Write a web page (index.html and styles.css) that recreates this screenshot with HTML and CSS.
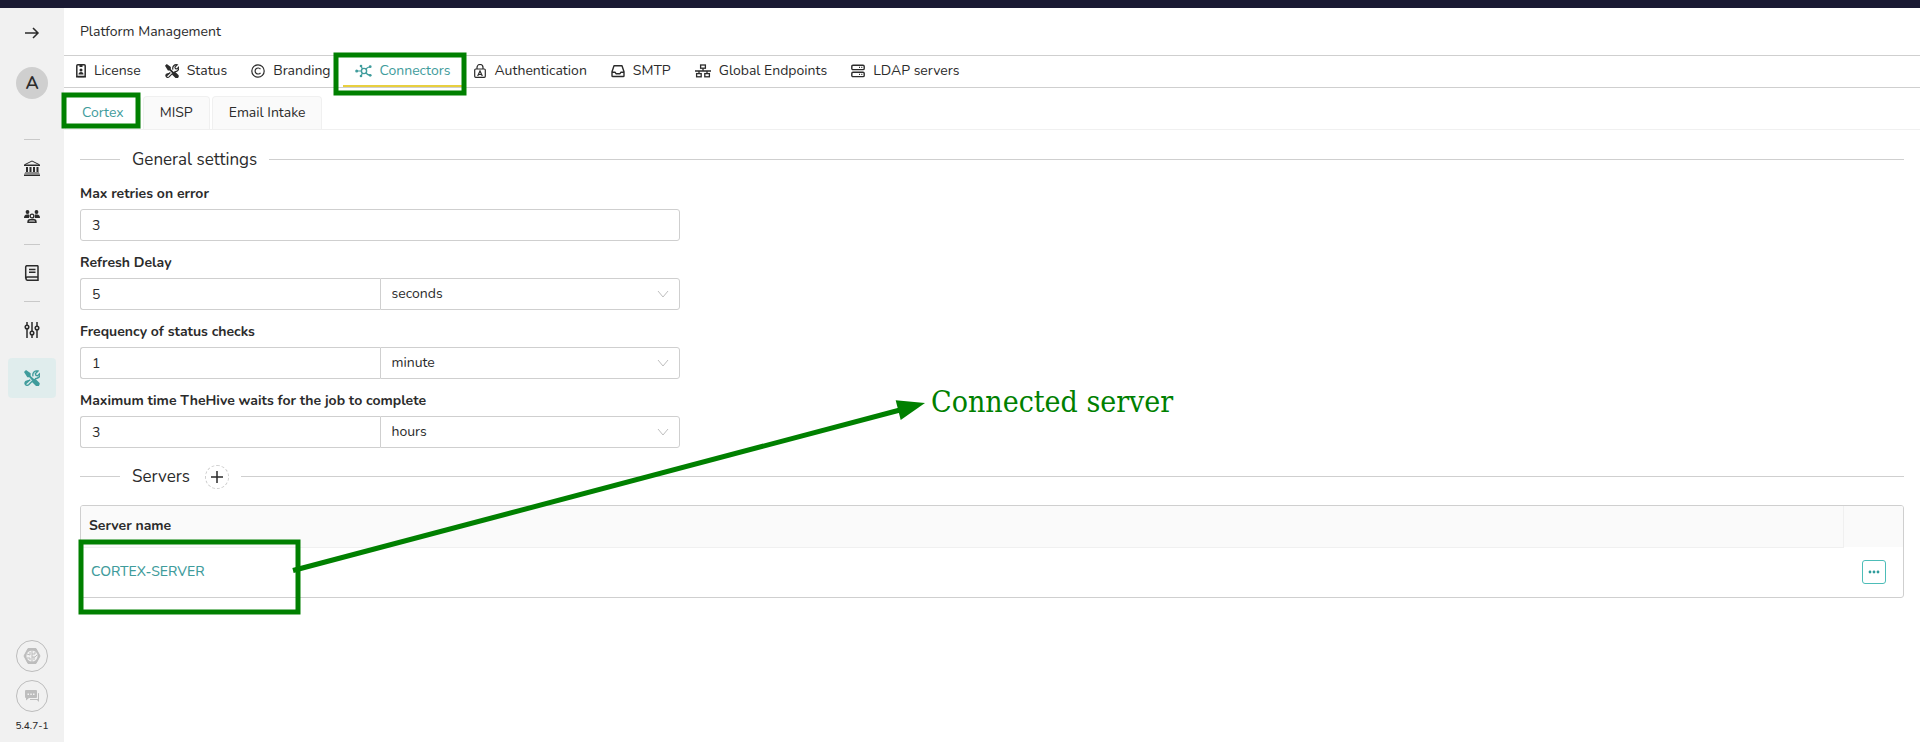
FILE: index.html
```html
<!DOCTYPE html>
<html lang="en">
<head>
<meta charset="utf-8">
<title>Platform Management</title>
<link rel="stylesheet" href="styles.css">
</head>
<body>
<svg class="sprite" aria-hidden="true">
  <symbol id="tools" viewBox="0 0 24 24">
    <path d="M0 3 3 0l7 5v4l5 4.500 2-.5 6 6q1.500 2-.5 4.500t-4.500.5l-6-6 .5-2L8 11H5z" fill="currentColor"/>
    <path d="M9 14.500l-6.500 6M9.500 15l-7 2.500q-2 2.500 0 4.500t4.500 0l6-6M13.500 9.500q-1-4 1.500-6.500t6-1.500l-4 4 1 2.500 2.500.5 3.500-3.500q.5 4.500-2.500 6.500t-5 1" fill="none" stroke="currentColor" stroke-width="2"/>
  </symbol>
</svg>
<div class="topbar"></div>
<div class="app">
  <aside class="side">
    <button class="side-btn expand" aria-label="Expand menu"><svg width="16" height="16" viewBox="0 0 16 16" fill="none" stroke="currentColor" stroke-width="1.500"><path d="M1 8h13M9 3l5 5-5 5"/></svg></button>
    <button class="avatar">A</button>
    <nav class="side-nav" aria-label="Main">
      <hr>
      <a class="side-btn" href="#org" aria-label="Organisations"><svg width="16" height="16" viewBox="0 0 16 16"><path d="M8 1l7 3.500v1H1v-1z" fill="none" stroke="currentColor"/><path d="M0 4.500h16V6H0zM2 7h2v5H2zM5.500 7h2v5h-2zM9 7h2v5H9zM12.500 7h2v5h-2zM1 12.500h14v1H1zM0 15h16v1H0z" fill="currentColor"/><path d="M0 13.500h16V15H0z" fill="#888"/></svg></a>
      <a class="side-btn" href="#users" aria-label="Users"><svg width="16" height="16" viewBox="0 0 16 16"><g fill="currentColor"><circle cx="3.500" cy="4" r="1.900"/><circle cx="12.500" cy="4" r="1.900"/><path d="M0 10q0-3.500 3-3.500h2V10zM16 10q0-3.500-3-3.500h-2V10z"/></g><g fill="none" stroke="currentColor" stroke-width="1.400"><circle cx="8" cy="8" r="1.900"/><path d="M4 14.300q0-2.500 2-2.500h4q2 0 2 2.500z"/></g></svg></a>
      <hr>
      <a class="side-btn" href="#docs" aria-label="Reports"><svg width="16" height="16" viewBox="0 0 16 16" fill="none" stroke="currentColor" stroke-width="1.500"><path d="M14 12H3.500a2 1.700 0 0 0 0 3.300H14V1.500q0-.8-.8-.8H3q-1.300 0-1.300 1.300v11.500M5 4.500h6.500M5 7.300h6.500"/></svg></a>
      <hr>
      <a class="side-btn" href="#entities" aria-label="Entities"><svg width="16" height="16" viewBox="0 0 16 16" fill="none" stroke="currentColor" stroke-width="1.500"><path d="M3 0v3M3 7v9M8 0v9M8 13v3M13 0v4M13 8v8"/><circle cx="3" cy="5" r="1.800"/><circle cx="8" cy="11" r="1.800"/><circle cx="13" cy="6" r="1.800"/></svg></a>
      <a class="side-btn active" href="#platform" aria-label="Platform"><svg width="16" height="16"><use href="#tools"/></svg></a>
    </nav>
    <div class="side-foot">
      <button class="round" aria-label="Cortex status"><svg width="18" height="18" viewBox="0 0 18 18"><path d="M5 1.500h8L17 9l-4 7.500H5L1 9z" fill="#bdbdbd" stroke="#bdbdbd" stroke-linejoin="round"/><circle cx="9" cy="9" r="5.600" fill="#f1f1f1"/><path d="M9 3v12M4 7l3 1V5M4 11h3v2M9 7h3V5M9 10h3l2-2M11 10v3" fill="none" stroke="#bdbdbd"/></svg></button>
      <button class="round" aria-label="Chat"><svg width="16" height="16" viewBox="0 0 16 16" fill="#bdbdbd"><path d="M2 2h10q1 0 1 1v6q0 1-1 1H5l-3 2.500V10q-1 0-1-1V3q0-1 1-1z"/><path d="M14 5h.500q.5 0 .5 1v8l-2-2H6v-1h8z"/><path d="M3.500 5.500h1.500V7H3.500zM6.300 5.500h1.500V7H6.300zM9 5.500h1.500V7H9z" fill="#f1f1f1"/></svg></button>
      <span class="version">5.4.7-1</span>
    </div>
  </aside>
  <main class="main">
    <header class="page-head"><h1>Platform Management</h1></header>
    <nav class="tabs" aria-label="Platform sections">
      <a href="#license"><svg width="10" height="14" viewBox="0 0 10 14"><rect x=".8" y=".8" width="8.400" height="11.600" rx="1" fill="none" stroke="currentColor" stroke-width="1.500"/><path d="M3.500 1h3v2h-3zM2.500 10.500q0-2.500 2.500-2.500t2.500 2.500zM0 12h10v1.500H0z" fill="currentColor"/><circle cx="5" cy="6" r="1.500" fill="currentColor"/></svg>License</a>
      <a href="#status"><svg width="14" height="14"><use href="#tools"/></svg>Status</a>
      <a href="#branding"><svg width="14" height="14" viewBox="0 0 14 14" fill="none" stroke="currentColor" stroke-width="1.200"><circle cx="7" cy="7" r="6.200"/><path d="M9.500 5.200a3 3 0 1 0 0 3.600"/></svg>Branding</a>
      <a class="on" href="#connectors"><svg width="17" height="14" viewBox="0 0 17 14" fill="none" stroke="currentColor"><circle cx="9" cy="7" r="2.600" stroke-width="1.400"/><path d="M2 7h4.500M7.500 5 6 2M7.500 9 6 12M11 5.500Q12 3 15 3M11 8.500Q12 11 15 11" stroke-width="1.200"/><g fill="currentColor" stroke="none"><circle cx="1.700" cy="7" r="1.500"/><circle cx="6" cy="2" r="1.300"/><circle cx="6" cy="12" r="1.300"/><circle cx="15.200" cy="2.700" r="1.400"/><circle cx="15.200" cy="11.300" r="1.400"/></g></svg>Connectors</a>
      <a href="#authentication"><svg width="12" height="14" viewBox="0 0 12 14" fill="none" stroke="currentColor" stroke-width="1.200"><path d="M3 5V3.500a3 3 0 0 1 6 0V5"/><rect x=".7" y="5" width="10.600" height="8.300" rx="1"/><path d="M3.700 12 6 7l2.300 5M4.500 10.500h3"/></svg>Authentication</a>
      <a href="#smtp"><svg width="14" height="14" viewBox="0 0 14 14" fill="none" stroke="currentColor" stroke-width="1.400" stroke-linejoin="round"><path d="M3 1.700h8l2 6v4q0 .8-.8.8H1.800q-.8 0-.8-.8v-4zM1 8.200h3l1 1.500h4l1-1.500h3"/></svg>SMTP</a>
      <a href="#endpoints"><svg width="16" height="14" viewBox="0 0 16 14" fill="none" stroke="currentColor" stroke-width="1.300"><rect x="5.600" y="1" width="4.800" height="3.200"/><rect x="1.600" y="9.600" width="4.600" height="3.200"/><rect x="9.800" y="9.600" width="4.600" height="3.200"/><path d="M8 4.200V7M0 7h16M4 7v2.600M12 7v2.600"/></svg>Global Endpoints</a>
      <a href="#ldap"><svg width="14" height="14" viewBox="0 0 14 14" fill="none" stroke="currentColor" stroke-width="1.400"><rect x=".8" y="1.200" width="12.400" height="4.400" rx="1.200"/><rect x=".8" y="8.200" width="12.400" height="4.400" rx="1.200"/><path d="M8 3.400h1M10.300 3.400h1M8 10.400h1M10.300 10.400h1"/></svg>LDAP servers</a>
    </nav>
    <nav class="subtabs" aria-label="Connector types">
      <a class="on" href="#cortex">Cortex</a>
      <a href="#misp">MISP</a>
      <a href="#email">Email Intake</a>
    </nav>
    <section class="content">
      <h2 class="divider">General settings</h2>
      <form class="form">
        <div class="field"><label for="retries">Max retries on error</label><div class="group"><input id="retries" value="3"></div></div>
        <div class="field"><label for="delay">Refresh Delay</label><div class="group"><input id="delay" value="5"><select aria-label="Refresh delay unit"><option>seconds</option></select><svg class="chev" width="12" height="8" viewBox="0 0 12 8"><path d="M1 1l5 6 5-6"/></svg></div></div>
        <div class="field"><label for="freq">Frequency of status checks</label><div class="group"><input id="freq" value="1"><select aria-label="Frequency unit"><option>minute</option></select><svg class="chev" width="12" height="8" viewBox="0 0 12 8"><path d="M1 1l5 6 5-6"/></svg></div></div>
        <div class="field"><label for="maxtime">Maximum time TheHive waits for the job to complete</label><div class="group"><input id="maxtime" value="3"><select aria-label="Maximum time unit"><option>hours</option></select><svg class="chev" width="12" height="8" viewBox="0 0 12 8"><path d="M1 1l5 6 5-6"/></svg></div></div>
      </form>
      <h2 class="divider servers">Servers <button class="add" aria-label="Add server"><svg width="12" height="12" viewBox="0 0 12 12"><path d="M6 0v12M0 6h12" stroke="currentColor" stroke-width="1.500"/></svg></button></h2>
      <div class="table-box">
        <table>
          <thead><tr><th>Server name</th><td class="act"></td></tr></thead>
          <tbody><tr><td><a href="#server">CORTEX-SERVER</a></td><td class="act"><button class="more" aria-label="More actions"><svg width="12" height="4" viewBox="0 0 12 4" fill="currentColor"><circle cx="2" cy="2" r="1.400"/><circle cx="6" cy="2" r="1.400"/><circle cx="10" cy="2" r="1.400"/></svg></button></td></tr></tbody>
        </table>
      </div>
    </section>
  </main>
</div>
<svg class="notes" width="1240" height="640" viewBox="0 0 1240 640" fill="none" stroke="#008000" stroke-width="5">
  <rect x="336" y="55" width="128" height="38"/>
  <rect x="64" y="95" width="74" height="31"/>
  <rect x="81" y="542" width="217" height="70"/>
  <path d="M293 570.500 900 410"/>
  <path d="M925 403 895.700 400.300 900.700 420z" fill="#008000" stroke="none"/>
  <text class="note-text" x="931" y="412">Connected server</text>
</svg>
</body>
</html>
```

FILE: styles.css
```css
* { box-sizing: border-box; }
body {
  margin: 0;
  min-height: 100vh;
  display: flex;
  flex-direction: column;
  position: relative;
  background: #fff;
  color: #2b2b2b;
  font: 14px/20px Nunito, "Noto Sans", sans-serif;
}
a { color: inherit; text-decoration: none; }
button, input, select { font: inherit; color: inherit; }
button { padding: 0; background: none; border: 0; cursor: pointer; }
svg { display: block; flex: none; }
.sprite { position: absolute; width: 0; height: 0; }
.topbar { height: 8px; background: #1a1a33; }
.app { flex: 1; display: flex; }

.side {
  width: 64px;
  flex: none;
  display: flex;
  flex-direction: column;
  align-items: center;
  padding: 5px 0 10px;
  background: #f1f1f1;
}
.side-btn {
  width: 48px;
  height: 40px;
  display: flex;
  align-items: center;
  justify-content: center;
  border-radius: 4px;
}
.side-btn.active { background: #e0eded; color: #3f9c9c; }
.avatar {
  width: 32px;
  height: 32px;
  margin-top: 14px;
  border-radius: 50%;
  background: #cfcfcf;
  font-size: 18px;
  font-weight: 600;
}
.side-nav {
  display: flex;
  flex-direction: column;
  align-items: center;
  gap: 8px;
  margin-top: 40px;
}
.side-nav hr { width: 16px; height: 1px; margin: 0; border: 0; background: #c9c9c9; }
.side-foot {
  margin-top: auto;
  display: flex;
  flex-direction: column;
  align-items: center;
  gap: 8px;
}
.round {
  width: 32px;
  height: 32px;
  display: flex;
  align-items: center;
  justify-content: center;
  border: 1px solid #bdbdbd;
  border-radius: 50%;
}
.version { font-size: 10px; line-height: 12px; font-weight: 500; }

.main { flex: 1; min-width: 0; }
.page-head {
  height: 48px;
  display: flex;
  align-items: center;
  padding: 0 16px;
  border-bottom: 1px solid #cfcfcf;
}
h1 { margin: 0; font-size: 14px; font-weight: 400; }
.tabs { display: flex; height: 32px; border-bottom: 1px solid #cfcfcf; }
.tabs a {
  display: flex;
  align-items: center;
  gap: 8px;
  padding: 0 12px;
  border-bottom: 2px solid transparent;
}
.tabs .on { color: #3f9c9c; border-color: #e8cf3f; }
.subtabs {
  display: flex;
  gap: 2px;
  padding: 8px 1px 0;
  border-bottom: 1px solid #f0f0f0;
}
.subtabs a {
  padding: 6px 16px;
  border: 1px solid #f0f0f0;
  border-bottom: 0;
  border-radius: 4px 4px 0 0;
  background: #fafafa;
}
.subtabs .on { background: #fff; color: #3f9c9c; }

.content { padding: 16px; }
.divider {
  display: flex;
  align-items: center;
  gap: 12px;
  margin: 0;
  font-size: 17px;
  line-height: 27px;
  font-weight: 400;
}
.divider::before, .divider::after { content: ""; height: 1px; background: #cfcfcf; }
.divider::before { width: 40px; }
.divider::after { flex: 1; }
.servers { margin: 15px 0; }
.add {
  width: 24px;
  height: 24px;
  margin-left: 3px;
  display: flex;
  align-items: center;
  justify-content: center;
  border: 1px dashed #cfcfcf;
  border-radius: 50%;
}
.form { display: grid; gap: 12px; width: 600px; max-width: 100%; margin-top: 11px; }
.field label { display: block; height: 25px; font-weight: 700; }
.group { display: flex; position: relative; }
.group input, .group select {
  flex: 1 1 0;
  min-width: 0;
  height: 32px;
  padding: 0 11px;
  border: 1px solid #cfcfcf;
  border-radius: 3px;
  background: #fff;
  outline: 0;
  appearance: none;
}
.group input:not(:only-child) { border-right: 0; border-radius: 3px 0 0 3px; }
.group select { border-radius: 0 3px 3px 0; }
.chev {
  position: absolute;
  right: 11px;
  top: 12px;
  fill: none;
  stroke: #bfbfbf;
  pointer-events: none;
}

.table-box { border: 1px solid #cfcfcf; border-radius: 3px; overflow: hidden; }
table { width: 100%; border-collapse: collapse; }
th, td { padding: 0 10px; text-align: left; }
th { height: 41px; padding: 0 8px; font-weight: 700; border-right: 1px solid #f0f0f0; border-bottom: 1px solid #f0f0f0; }
thead { background: #fafafa; }
tbody td { height: 50px; }
tbody a { color: #3f9c9c; font-weight: 500; }
.act, tbody .act { width: 60px; padding: 0 17px 0 19px; }
.more {
  width: 24px;
  height: 24px;
  display: flex;
  align-items: center;
  justify-content: center;
  border: 1px solid #4dbdb8;
  border-radius: 3px;
  color: #2f9c9c;
}

.notes { position: absolute; left: 0; top: 0; pointer-events: none; }
.note-text {
  font: 30px "DejaVu Serif Condensed", "DejaVu Serif", serif;
  fill: #008000;
  stroke: none;
}
```
